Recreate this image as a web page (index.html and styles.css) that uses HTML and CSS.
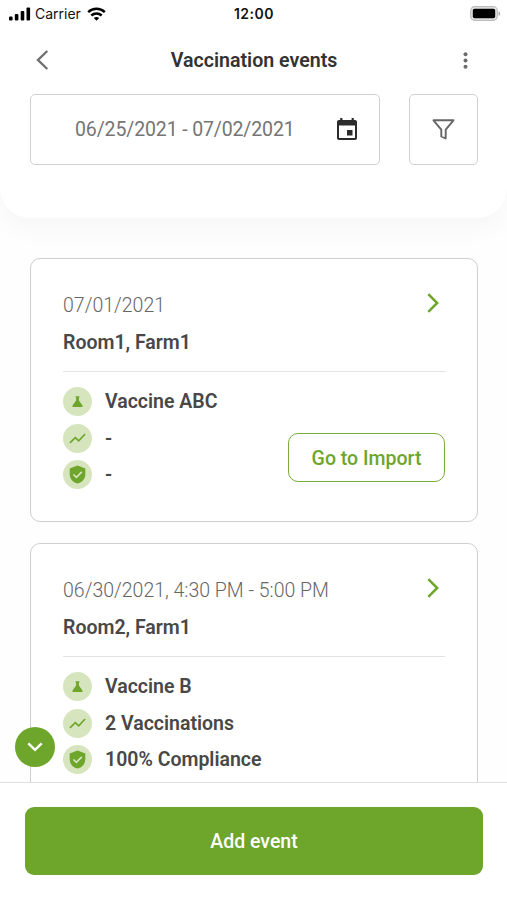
FILE: index.html
```html
<!DOCTYPE html>
<html lang="en">
<head>
    <meta charset="UTF-8">
    <meta name="viewport" content="width=device-width, initial-scale=1.0">
    <title>Vaccination events</title>
    <link rel="stylesheet" href="styles.css">
</head>
<body>
    <!-- shared icons -->
    <svg class="icon-defs" width="0" height="0">
        <symbol id="icon-next" viewBox="0 0 12 20">
            <path d="M1.3 1.2L10.2 10L1.3 18.8" fill="none" stroke="currentColor" stroke-width="2.5"/>
        </symbol>
        <symbol id="icon-flask" viewBox="0 0 29 29">
            <path d="M12.6 9.2h3.8v1.400h-.5v2.900L19.500 18.400q.5 1.500-.8 1.500h-8.400q-1.300 0-.8-1.500L13.100 13.500v-2.900h-.5z" fill="currentColor"/>
        </symbol>
        <symbol id="icon-trend" viewBox="0 0 29 29">
            <path d="M6.900 18.900L12.300 13.600L15.700 16.900L22.100 10" fill="none" stroke="currentColor" stroke-width="1.600"/>
        </symbol>
        <symbol id="icon-shield" viewBox="0 0 29 29">
            <path d="M14.500 5.400L22.300 8.500V14.500C22.300 18.900 19 22.500 14.500 23.600C10 22.500 6.700 18.900 6.700 14.500V8.500z" fill="currentColor"/>
            <path d="M10.400 14.500L13.400 17.400L18.800 11.800" fill="none" stroke="#d6e5bd" stroke-width="1.700"/>
        </symbol>
    </svg>

    <div class="app">
        <header class="header">
            <div class="status-bar">
                <div class="status-left">
                    <svg width="22" height="14" viewBox="0 0 22 14">
                        <rect x="0" y="9.500" width="3.600" height="4" rx="1"/>
                        <rect x="5.800" y="7" width="3.600" height="6.500" rx="1"/>
                        <rect x="11.700" y="4" width="3.600" height="9.500" rx="1"/>
                        <rect x="17.500" y="0.500" width="3.600" height="13" rx="1"/>
                    </svg>
                    <span class="carrier">Carrier</span>
                    <svg width="19" height="14" viewBox="0 0 19 14" fill="none" stroke="#000" stroke-width="2.500">
                        <path d="M1.200 5.100C5.900 0.600 13.100 0.600 17.800 5.100"/>
                        <path d="M4.300 8.500C7.300 5.700 11.700 5.700 14.700 8.500"/>
                        <path d="M6.800 11C8.300 9.500 10.700 9.500 12.200 11L9.500 13.700z" fill="#000" stroke="none"/>
                    </svg>
                </div>
                <div class="clock">12:00</div>
                <svg class="battery" width="31" height="15" viewBox="0 0 31 15">
                    <rect x="0.700" y="0.700" width="26.600" height="13.600" rx="4" fill="#e4e4e4" stroke="#bdbdbd" stroke-width="1.200"/>
                    <rect x="2.800" y="2.800" width="22.400" height="9.400" rx="1.800"/>
                    <path d="M28.600 5.200C30.700 6 30.700 9 28.600 9.800z" fill="#a5a5a5"/>
                </svg>
            </div>

            <div class="title-bar">
                <a href="#" class="back" aria-label="Back">
                    <svg width="13" height="20" viewBox="0 0 13 20">
                        <path d="M11.300 1L2 10L11.300 19" fill="none" stroke="#707070" stroke-width="2.400"/>
                    </svg>
                </a>
                <h1>Vaccination events</h1>
                <button class="more" aria-label="More">
                    <svg width="5" height="17" viewBox="0 0 5 17" fill="#6c6c6c">
                        <circle cx="2.500" cy="2.300" r="2"/>
                        <circle cx="2.500" cy="8.500" r="2"/>
                        <circle cx="2.500" cy="14.700" r="2"/>
                    </svg>
                </button>
            </div>

            <div class="filters">
                <div class="date-range">
                    <span>06/25/2021 - 07/02/2021</span>
                    <svg width="20" height="22" viewBox="0 0 20 22" fill="#2c2c2c">
                        <path fill-rule="evenodd" d="M3.200 0h2.200v2h9.200V0h2.200v2H18c1.200 0 2 .8 2 2v16c0 1.200-.8 2-2 2H2c-1.200 0-2-.8-2-2V4c0-1.200.8-2 2-2h1.200zM2 7.500V20h16V7.500z"/>
                        <rect x="10" y="12" width="5.500" height="5.500"/>
                    </svg>
                </div>
                <button class="filter-btn" aria-label="Filter">
                    <svg width="23" height="21" viewBox="0 0 23 21">
                        <path d="M1.500 1.300H21.500L13.700 10.700V19.500L9.300 17.500V10.700z" fill="none" stroke="#666" stroke-width="1.900" stroke-linejoin="round"/>
                    </svg>
                </button>
            </div>
        </header>

        <main class="events">
            <div class="card">
                <svg class="next" width="12" height="20"><use href="#icon-next"/></svg>
                <p class="date">07/01/2021</p>
                <h2>Room1, Farm1</h2>
                <div class="details">
                    <ul>
                        <li><svg class="badge"><use href="#icon-flask"/></svg>Vaccine ABC</li>
                        <li><svg class="badge"><use href="#icon-trend"/></svg>-</li>
                        <li><svg class="badge"><use href="#icon-shield"/></svg>-</li>
                    </ul>
                    <button class="import-btn">Go to Import</button>
                </div>
            </div>

            <div class="card">
                <svg class="next" width="12" height="20"><use href="#icon-next"/></svg>
                <p class="date">06/30/2021, 4:30 PM - 5:00 PM</p>
                <h2>Room2, Farm1</h2>
                <div class="details">
                    <ul>
                        <li><svg class="badge"><use href="#icon-flask"/></svg>Vaccine B</li>
                        <li><svg class="badge"><use href="#icon-trend"/></svg>2 Vaccinations</li>
                        <li><svg class="badge"><use href="#icon-shield"/></svg>100% Compliance</li>
                    </ul>
                </div>
            </div>
        </main>

        <button class="scroll-down" aria-label="Scroll down">
            <svg width="16" height="10" viewBox="0 0 16 10">
                <path d="M1.300 1.300L8 7.800L14.700 1.300" fill="none" stroke="#fff" stroke-width="2.400"/>
            </svg>
        </button>

        <footer>
            <button class="add-btn">Add event</button>
        </footer>
    </div>
</body>
</html>
```
FILE: styles.css
```css
* {
    margin: 0;
    padding: 0;
    box-sizing: border-box;
}

body {
    font-family: 'Roboto', sans-serif;
    color: #484848;
    background-color: #fefefe;
}

button {
    font-family: inherit;
    background: none;
    border: none;
    cursor: pointer;
}

svg {
    display: block;
    flex-shrink: 0;
}

.icon-defs {
    position: absolute;
}

.app {
    position: relative;
    display: flex;
    flex-direction: column;
    height: 900px;
    overflow: hidden;
}

/* header */
.header {
    height: 218px;
    flex-shrink: 0;
    background-color: #fff;
    border-radius: 0 0 30px 30px;
    box-shadow: 0 12px 24px rgba(0, 0, 0, 0.03);
}

.status-bar {
    display: grid;
    grid-template-columns: 1fr auto 1fr;
    align-items: center;
    height: 27px;
    padding: 0 6px 0 9px;
    font-family: 'Inter', sans-serif;
    color: #111;
}

.status-left {
    display: flex;
    align-items: center;
    gap: 4px;
}

.carrier {
    font-size: 14px;
    margin-right: 2px;
}

.clock {
    font-size: 14px;
    font-weight: 600;
    letter-spacing: 0.5px;
    margin-right: 2px;
}

.battery {
    justify-self: end;
}

.title-bar {
    display: flex;
    justify-content: space-between;
    align-items: center;
    height: 66px;
    padding: 0 39px 0 36px;
}

.title-bar h1 {
    font-size: 19.6px;
    font-weight: 600;
    color: #333;
    margin-right: 4px;
}

.filters {
    display: flex;
    justify-content: space-between;
    padding: 1px 29px 0 30px;
}

.date-range {
    display: flex;
    justify-content: space-between;
    align-items: center;
    width: 350px;
    height: 71px;
    padding: 0 22px 2px 44px;
    border: 1px solid #d0d0d0;
    border-radius: 5px;
    font-size: 19.5px;
    letter-spacing: -0.13px;
    color: #757575;
}

.date-range span {
    padding-top: 2px;
}

.filter-btn {
    display: flex;
    justify-content: center;
    align-items: center;
    width: 69px;
    height: 71px;
    padding-bottom: 1px;
    border: 1px solid #d0d0d0;
    border-radius: 5px;
}

/* event cards */
.events {
    flex: 1;
    min-height: 0;
    padding: 40px 29px 0 30px;
    overflow: hidden;
}

.card {
    position: relative;
    height: 264px;
    margin-bottom: 21px;
    padding: 32px 32px 0 32px;
    background-color: #fff;
    border: 1px solid #cfcfcf;
    border-radius: 10px;
}

.next {
    position: absolute;
    top: 34px;
    right: 38px;
    color: #6ea52b;
}

.card .date {
    font-size: 19.5px;
    font-weight: 300;
    line-height: 30px;
    color: #666;
}

.card h2 {
    font-size: 19.5px;
    font-weight: 600;
    line-height: 30px;
    margin-top: 7px;
    height: 44px;
    border-bottom: 1px solid #e3e3e3;
}

.details {
    display: flex;
    justify-content: space-between;
    align-items: flex-end;
    padding-top: 15px;
}

.details ul {
    display: flex;
    flex-direction: column;
    gap: 7.5px;
    list-style: none;
}

.details li {
    display: flex;
    align-items: flex-start;
    gap: 13px;
    height: 29px;
    font-size: 19.5px;
    font-weight: 600;
    line-height: 30px;
}

.badge {
    width: 29px;
    height: 29px;
    border-radius: 50%;
    background-color: #d6e5bd;
    color: #6ea52b;
}

.import-btn {
    width: 157px;
    height: 49px;
    padding-top: 1px;
    margin-bottom: 7px;
    border: 1px solid #78ac3c;
    border-radius: 10px;
    font-size: 19.5px;
    font-weight: 500;
    color: #6ea52b;
}

.scroll-down {
    position: absolute;
    left: 15px;
    top: 727px;
    display: flex;
    justify-content: center;
    align-items: center;
    width: 40px;
    height: 40px;
    border-radius: 50%;
    background-color: #6ea52b;
}

/* bottom action */
footer {
    height: 118px;
    flex-shrink: 0;
    padding: 24px 24px 0 25px;
    background-color: #fff;
    border-top: 1px solid #dfdfdf;
}

.add-btn {
    width: 100%;
    height: 68px;
    border-radius: 9px;
    background-color: #6ea52b;
    color: #fff;
    font-size: 19.5px;
    font-weight: 500;
}
```
